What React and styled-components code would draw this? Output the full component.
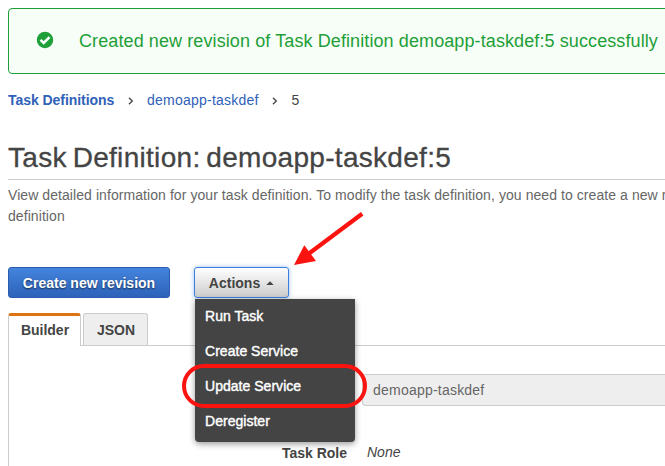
import React from 'react';
import styled, { createGlobalStyle } from 'styled-components';

const GlobalStyle = createGlobalStyle`
  * { box-sizing: border-box; }
  html, body { height: 466px; overflow: hidden; }
  body {
    margin: 0;
    background: #fff;
    color: #444;
    font: 14px/21px "Liberation Sans", Arial, sans-serif;
  }
`;

const Page = styled.main`
  position: relative;
  display: flex;
  flex-direction: column;
  height: 466px;
  padding: 8px 0 0 8px;
  overflow: hidden;
`;

const Alert = styled.div`
  display: flex;
  align-items: center;
  flex: none;
  gap: 25px;
  width: 680px;
  height: 66px;
  padding-left: 27px;
  border: 1px solid #1e9f37;
  border-radius: 4px;
  background: #f7fef8;
  color: #1e9f37;
  font-size: 18px;
  letter-spacing: 0.1px;
  white-space: nowrap;
`;

const CheckIcon = styled.svg`
  flex: none;
  width: 18px;
  height: 18px;
  margin-bottom: 2px;
`;

const Breadcrumb = styled.nav`
  display: flex;
  align-items: center;
  height: 21px;
  margin-top: 16px;
  color: #444;
`;

const Crumb = styled.a`
  color: #2f61b9;
  font-weight: ${(p) => (p.$strong ? 700 : 400)};
  letter-spacing: ${(p) => (p.$strong ? -0.05 : 0.22)}px;
`;

const Chevron = styled.svg`
  width: 6px;
  height: 8px;
  margin: 1px 13px 0 13.8px;
`;

const Title = styled.h1`
  flex: none;
  height: 43px;
  margin: 26px 0 0;
  padding-top: 5px;
  border-bottom: 1px solid #ccc;
  font-size: 28px;
  font-weight: 400;
  line-height: 32px;
  letter-spacing: 0.3px;
  word-spacing: -2.2px;
  -webkit-text-stroke: 0.3px #444;
`;

const Description = styled.p`
  flex: none;
  width: 800px;
  margin: 5px 0 0;
  color: #666;
  letter-spacing: 0.07px;
`;

const Toolbar = styled.div`
  display: flex;
  gap: 24px;
  margin-top: 40px;
`;

const Button = styled.button`
  display: flex;
  align-items: center;
  justify-content: center;
  gap: 6px;
  width: ${(p) => (p.$primary ? 162 : 95)}px;
  height: 31px;
  padding: 1px 0 0;
  border: 1px solid ${(p) => (p.$primary ? '#2a5cb0' : '#3b7fe0')};
  border-radius: 3px;
  background: ${(p) =>
    p.$primary ? 'linear-gradient(#4484dd, #2d62b9)' : 'linear-gradient(#fff, #ccc)'};
  box-shadow: ${(p) => (p.$primary ? 'none' : '0 0 4px rgba(60, 127, 224, 0.5)')};
  color: ${(p) => (p.$primary ? '#fff' : '#444')};
  font: 700 14px/21px "Liberation Sans", Arial, sans-serif;
  text-shadow: ${(p) => (p.$primary ? '0 1px 2px rgba(0, 0, 0, 0.6)' : 'none')};
`;

const Caret = styled.svg`
  width: 8px;
  height: 4px;
`;

const Dropdown = styled.div`
  position: relative;
`;

const Menu = styled.ul`
  position: absolute;
  z-index: 1;
  top: 32px;
  left: 1px;
  width: 160px;
  height: 143px;
  margin: 0;
  padding: 0;
  border-radius: 0 0 4px 4px;
  background: #444;
  box-shadow: 0 2px 6px rgba(0, 0, 0, 0.4);
  list-style: none;
`;

const MenuItem = styled.li`
  height: 35px;
  padding-left: 10px;
  color: #fff;
  line-height: 34px;
  letter-spacing: 0.03px;
  white-space: nowrap;
  -webkit-text-stroke: 0.4px #fff;
`;

const Tabs = styled.div`
  display: flex;
  align-items: flex-end;
  gap: 2px;
  height: 33px;
  margin-top: 15px;
  flex: none;
`;

const Tab = styled.div`
  display: flex;
  justify-content: center;
  width: ${(p) => (p.$active ? 73 : 65)}px;
  height: ${(p) => (p.$active ? 33 : 32)}px;
  margin-bottom: ${(p) => (p.$active ? 0 : 1)}px;
  padding-top: ${(p) => (p.$active ? 4 : 6)}px;
  padding-left: 1px;
  border: 1px solid #ccc;
  border-bottom: 0;
  border-top: ${(p) => (p.$active ? '3px solid #dd7411' : '1px solid #ccc')};
  border-radius: 3px 3px 0 0;
  background: ${(p) => (p.$active ? '#fff' : '#eee')};
  font-weight: 700;
  z-index: 1;
`;

const Panel = styled.section`
  display: grid;
  grid-template-columns: 338px 1fr;
  column-gap: 15px;
  align-content: start;
  height: 140px;
  margin-top: -1px;
  padding-top: 28px;
  border: 1px solid #ccc;
  border-right: 0;
  flex: none;
`;

const Label = styled.div`
  margin-top: ${(p) => p.$offset || 0}px;
  font-weight: 700;
  text-align: right;
`;

const NameField = styled.div`
  height: 32px;
  padding: 5px 10px;
  border: 1px solid #ccc;
  border-right: 0;
  border-radius: 4px 0 0 4px;
  background: #eee;
  color: #666;
  letter-spacing: 0.22px;
`;

const Value = styled.div`
  margin: 36px 0 0 5px;
  font-style: italic;
`;

const Highlight = styled.div`
  position: absolute;
  z-index: 2;
  top: 364px;
  left: 182px;
  width: 185px;
  height: 44px;
  border: 4px solid #fb1310;
  border-radius: 22px;
`;

const Arrow = styled.svg`
  position: absolute;
  z-index: 2;
  top: 210px;
  left: 290px;
  width: 80px;
  height: 60px;
`;

const Separator = () => (
  <Chevron viewBox="0 0 6 8">
    <path d="M1 .7 4.3 4 1 7.3" fill="none" stroke="#444" strokeWidth="1.3" />
  </Chevron>
);

const actions = ['Run Task', 'Create Service', 'Update Service', 'Deregister'];

export default function App() {
  return (
    <>
      <GlobalStyle />
      <Page>
        <Alert>
          <CheckIcon viewBox="0 0 18 18">
            <circle cx="9" cy="9" r="8.2" fill="#1e9f37" />
            <path d="m4.5 8.9 3.2 3.1 5.8-5.8" fill="none" stroke="#fff" strokeWidth="2.6" />
          </CheckIcon>
          Created new revision of Task Definition demoapp-taskdef:5 successfully
        </Alert>
        <Breadcrumb>
          <Crumb $strong>Task Definitions</Crumb>
          <Separator />
          <Crumb>demoapp-taskdef</Crumb>
          <Separator />
          <span>5</span>
        </Breadcrumb>
        <Title>Task Definition: demoapp-taskdef:5</Title>
        <Description>
          View detailed information for your task definition. To modify the task definition, you need to create a new revision of the task definition
        </Description>
        <Toolbar>
          <Button $primary>Create new revision</Button>
          <Dropdown>
            <Button>
              Actions
              <Caret viewBox="0 0 8 4">
                <path d="M.3 4 4 .3 7.7 4z" fill="#444" />
              </Caret>
            </Button>
            <Menu>
              {actions.map((action) => (
                <MenuItem key={action}>{action}</MenuItem>
              ))}
            </Menu>
          </Dropdown>
        </Toolbar>
        <Tabs>
          <Tab $active>Builder</Tab>
          <Tab>JSON</Tab>
        </Tabs>
        <Panel>
          <Label />
          <NameField>demoapp-taskdef</NameField>
          <Label $offset={37}>Task Role</Label>
          <Value>None</Value>
        </Panel>
        <Highlight />
        <Arrow viewBox="290 210 80 60">
          <path d="M362.2 213.8 309 253.5" stroke="#fb1310" strokeWidth="4.2" />
          <path d="m294 265 10.3-19.8L316 261z" fill="#fb1310" />
        </Arrow>
      </Page>
    </>
  );
}
